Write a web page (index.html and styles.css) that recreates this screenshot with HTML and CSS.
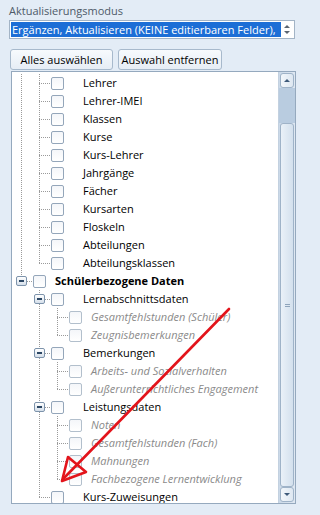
FILE: index.html
```html
<!DOCTYPE html>
<html lang="de">
<head>
<meta charset="utf-8">
<title>Aktualisierungsmodus</title>
<link rel="stylesheet" href="styles.css">
</head>
<body>
<div class="page">
  <div class="label">Aktualisierungsmodus</div>
  <div class="combo">
    <div class="combo-value">Ergänzen, Aktualisieren (KEINE editierbaren Felder),</div>
    <div class="spin">
      <span class="tri-up"></span>
      <span class="tri-down"></span>
    </div>
  </div>
  <div class="buttons">
    <button class="btn btn-all">Alles auswählen</button>
    <button class="btn btn-none">Auswahl entfernen</button>
  </div>
  <div class="panel">
    <div class="tree">
      <div class="row"><span class="g line"></span><span class="c tee"></span><span class="cb"></span><span class="t t1">Lehrer</span></div>
      <div class="row"><span class="g line"></span><span class="c tee"></span><span class="cb"></span><span class="t t1">Lehrer-IMEI</span></div>
      <div class="row"><span class="g line"></span><span class="c tee"></span><span class="cb"></span><span class="t t1">Klassen</span></div>
      <div class="row"><span class="g line"></span><span class="c tee"></span><span class="cb"></span><span class="t t1">Kurse</span></div>
      <div class="row"><span class="g line"></span><span class="c tee"></span><span class="cb"></span><span class="t t1">Kurs-Lehrer</span></div>
      <div class="row"><span class="g line"></span><span class="c tee"></span><span class="cb"></span><span class="t t1">Jahrgänge</span></div>
      <div class="row"><span class="g line"></span><span class="c tee"></span><span class="cb"></span><span class="t t1">Fächer</span></div>
      <div class="row"><span class="g line"></span><span class="c tee"></span><span class="cb"></span><span class="t t1">Kursarten</span></div>
      <div class="row"><span class="g line"></span><span class="c tee"></span><span class="cb"></span><span class="t t1">Floskeln</span></div>
      <div class="row"><span class="g line"></span><span class="c tee"></span><span class="cb"></span><span class="t t1">Abteilungen</span></div>
      <div class="row"><span class="g line"></span><span class="c corner"></span><span class="cb"></span><span class="t t1">Abteilungsklassen</span></div>
      <div class="row"><span class="c corner"><span class="exp"></span></span><span class="cb"></span><span class="t t0">Schülerbezogene Daten</span></div>
      <div class="row"><span class="g"></span><span class="c tee"><span class="exp"></span></span><span class="cb"></span><span class="t t1">Lernabschnittsdaten</span></div>
      <div class="row"><span class="g"></span><span class="g line"></span><span class="c tee"></span><span class="cb dis"></span><span class="t t2">Gesamtfehlstunden (Schüler)</span></div>
      <div class="row"><span class="g"></span><span class="g line"></span><span class="c corner"></span><span class="cb dis"></span><span class="t t2">Zeugnisbemerkungen</span></div>
      <div class="row"><span class="g"></span><span class="c tee"><span class="exp"></span></span><span class="cb"></span><span class="t t1">Bemerkungen</span></div>
      <div class="row"><span class="g"></span><span class="g line"></span><span class="c tee"></span><span class="cb dis"></span><span class="t t2">Arbeits- und Sozialverhalten</span></div>
      <div class="row"><span class="g"></span><span class="g line"></span><span class="c corner"></span><span class="cb dis"></span><span class="t t2">Außerunterrichtliches Engagement</span></div>
      <div class="row"><span class="g"></span><span class="c tee"><span class="exp"></span></span><span class="cb"></span><span class="t t1">Leistungsdaten</span></div>
      <div class="row"><span class="g"></span><span class="g line"></span><span class="c tee"></span><span class="cb dis"></span><span class="t t2">Noten</span></div>
      <div class="row"><span class="g"></span><span class="g line"></span><span class="c tee"></span><span class="cb dis"></span><span class="t t2">Gesamtfehlstunden (Fach)</span></div>
      <div class="row"><span class="g"></span><span class="g line"></span><span class="c tee"></span><span class="cb dis"></span><span class="t t2">Mahnungen</span></div>
      <div class="row"><span class="g"></span><span class="g line"></span><span class="c corner"></span><span class="cb dis"></span><span class="t t2">Fachbezogene Lernentwicklung</span></div>
      <div class="row"><span class="g"></span><span class="c corner"></span><span class="cb"></span><span class="t t1">Kurs-Zuweisungen</span></div>
    </div>
    <div class="sb">
      <div class="sb-btn"><span class="tri-up dark"></span></div>
      <div class="sb-pre"></div>
      <div class="sb-thumb"><span class="grip"></span></div>
      <div class="sb-btn"><span class="tri-down dark"></span></div>
    </div>
  </div>
</div>
<svg class="arrow" width="301" height="515" viewBox="0 0 301 515" aria-hidden="true">
  <line x1="229" y1="309" x2="64" y2="478" stroke="#e3141b" stroke-width="2.6" stroke-linecap="round"/>
  <polygon points="62,481 68,457 86,472" fill="none" stroke="#e3141b" stroke-width="2.6" stroke-linejoin="round"/>
</svg>
</body>
</html>
```
FILE: styles.css
```css
html, body {
  margin: 0;
  padding: 0;
}
body {
  background: #e3ecf6;
  font-family: "Open Sans", "Noto Sans", sans-serif;
  font-size: 11px;
  color: #000;
  width: 301px;
  height: 515px;
  overflow: hidden;
  position: relative;
}
.page {
  padding: 4px 6px 0 9px;
  display: flex;
  flex-direction: column;
}
.label {
  line-height: 14px;
  height: 14px;
  color: #4e5a68;
}
.combo {
  margin-top: 2px;
  height: 19px;
  box-sizing: border-box;
  border: 1px solid #a3b4c6;
  background: #fff;
  display: flex;
  padding: 1px 1px 1px 1px;
}
.combo-value {
  flex: 0 0 269px;
  background: #1c6ed6;
  color: #fff;
  line-height: 15px;
  padding-left: 1px;
  white-space: nowrap;
  overflow: hidden;
}
.spin {
  flex: 1;
  display: flex;
  flex-direction: column;
  align-items: center;
  justify-content: center;
  gap: 3px;
}
.tri-up {
  width: 0;
  height: 0;
  border-left: 3px solid transparent;
  border-right: 3px solid transparent;
  border-bottom: 3px solid #5a6470;
}
.tri-down {
  width: 0;
  height: 0;
  border-left: 3px solid transparent;
  border-right: 3px solid transparent;
  border-top: 3px solid #5a6470;
}
.tri-up.dark { border-bottom-color: #3e5a7a; }
.tri-down.dark { border-top-color: #3e5a7a; }
.buttons {
  margin-top: 10px;
  margin-left: 1px;
  display: flex;
  gap: 5px;
}
.btn {
  height: 21px;
  box-sizing: border-box;
  border: 1px solid #a7b9cc;
  border-radius: 3px;
  background: linear-gradient(#f7fafd, #e6edf5);
  font-family: inherit;
  font-size: 11px;
  color: #000;
  padding: 0;
  line-height: 18px;
}
.btn-all { width: 103px; }
.btn-none { width: 104px; }
.panel {
  margin-top: 1px;
  margin-left: 2px;
  margin-right: -1px;
  height: 433px;
  box-sizing: border-box;
  border: 1px solid #95a9be;
  background: #fff;
  display: flex;
}
.tree {
  flex: 1;
  overflow: hidden;
  padding-top: 2px;
}
.row {
  height: 18px;
  display: flex;
  align-items: center;
  white-space: nowrap;
}
.g, .c {
  flex: 0 0 18px;
  height: 18px;
  position: relative;
}
.g.line, .c::before {
  background-image: linear-gradient(to bottom, #9a9a9a 50%, transparent 50%);
  background-size: 1px 2px;
  background-repeat: repeat-y;
}
.g.line {
  background-position: 9px 0;
}
.c::before {
  content: "";
  position: absolute;
  left: 9px;
  top: 0;
  width: 1px;
  height: 18px;
}
.c.corner::before {
  height: 10px;
}
.c::after {
  content: "";
  position: absolute;
  left: 9px;
  top: 9px;
  width: 11px;
  height: 1px;
  background-image: linear-gradient(to right, #9a9a9a 50%, transparent 50%);
  background-size: 2px 1px;
  background-repeat: repeat-x;
}
.exp {
  position: absolute;
  left: 4px;
  top: 4px;
  width: 11px;
  height: 10px;
  box-sizing: border-box;
  border: 1px solid #7d93ab;
  border-radius: 2px;
  background: linear-gradient(#ffffff, #d5dfea);
  z-index: 1;
}
.exp::after {
  content: "";
  position: absolute;
  left: 2px;
  top: 3px;
  width: 5px;
  height: 2px;
  background: #2c4764;
}
.cb {
  flex: 0 0 13px;
  height: 13px;
  box-sizing: border-box;
  margin-left: 3px;
  border: 1px solid #94a6ba;
  border-radius: 2px;
  background: linear-gradient(#f4f6f9, #ffffff);
}
.cb.dis {
  border-color: #b2bfcc;
}
.t {
  line-height: 18px;
}
.t0 {
  margin-left: 9px;
  font-weight: bold;
}
.t1 {
  margin-left: 19px;
}
.t2 {
  margin-left: 9px;
  font-style: italic;
  color: #8a8a8a;
}
.sb {
  flex: 0 0 17px;
  display: flex;
  flex-direction: column;
  background: linear-gradient(to right, #cbd9e8, #dfe8f2);
  border-left: 1px solid #c3d1e0;
  box-sizing: border-box;
}
.sb-btn {
  height: 15px;
  margin: 1px 1px 0 1px;
  box-sizing: border-box;
  border: 1px solid #9fb3c8;
  border-radius: 3px;
  background: linear-gradient(to right, #f3f7fb, #dde7f1);
  display: flex;
  align-items: center;
  justify-content: center;
}
.sb-btn:last-child {
  margin: 0 1px 1px 1px;
}
.sb-pre {
  height: 35px;
  background: #b9cce0;
}
.sb-thumb {
  flex: 1;
  margin: 0 1px;
  box-sizing: border-box;
  border: 1px solid #9fb3c8;
  border-radius: 3px;
  background: linear-gradient(to right, #eaf1f8, #d3e0ed);
  display: flex;
  align-items: center;
  justify-content: center;
}
.grip {
  width: 5px;
  height: 3px;
  border-top: 1px solid #8ea4bb;
  border-bottom: 1px solid #8ea4bb;
  box-sizing: border-box;
}
.arrow {
  position: absolute;
  left: 0;
  top: 0;
  pointer-events: none;
}
```
